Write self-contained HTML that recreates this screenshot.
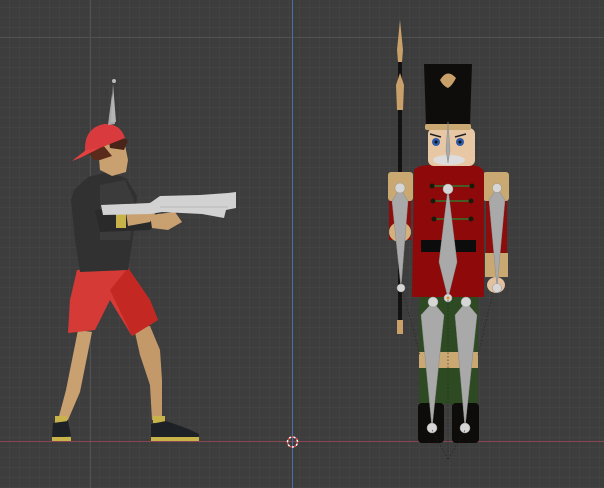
<!DOCTYPE html>
<html><head><meta charset="utf-8"><style>
html,body{margin:0;padding:0;background:#3d3d3d;}
svg{display:block}
</style></head><body>
<svg width="604" height="488" viewBox="0 0 604 488" xmlns="http://www.w3.org/2000/svg">
<defs>
<pattern id="g" x="9" y="7" width="10" height="10" patternUnits="userSpaceOnUse">
<path d="M0 0H10M0 0V10" stroke="#474747" stroke-width="1" fill="none"/>
</pattern>
</defs>
<rect width="604" height="488" fill="#3d3d3d"/>
<rect width="604" height="488" fill="url(#g)"/>
<line x1="0" y1="37.5" x2="604" y2="37.5" stroke="#515151"/>
<line x1="90.5" y1="0" x2="90.5" y2="488" stroke="#515151"/>
<line x1="0" y1="441.5" x2="604" y2="441.5" stroke="#8a4650" stroke-width="1"/>
<line x1="292.5" y1="0" x2="292.5" y2="488" stroke="#4a6ea8" stroke-width="1"/>

<!-- BOY -->
<!-- legs -->
<polygon points="78,330 92,332 80,392 68,420 58,420 66,390" fill="#c9a070"/>
<polygon points="134,328 150,326 160,350 162,380 162,420 152,420 150,385 140,355" fill="#c4996a"/>
<rect x="55" y="416" width="12" height="7" fill="#c8b24a"/>
<rect x="153" y="416" width="12" height="7" fill="#c8b24a"/>
<!-- shoes -->
<path d="M53 423 L68 421 L71 436 L52 438 Z" fill="#1e2226"/>
<rect x="52" y="437" width="19" height="4" fill="#c8b24a"/>
<path d="M151 424 L166 421 L186 428 L199 434 L199 438 L151 438 Z" fill="#1e2226"/>
<rect x="151" y="437" width="48" height="4" fill="#c8b24a"/>
<!-- shorts -->
<polygon points="77,270 128,268 150,300 158,320 132,336 110,300 95,330 68,333 70,300" fill="#d63a36"/>
<polygon points="110,290 128,268 150,300 158,320 132,336" fill="#c42822"/>
<!-- sweater -->
<polygon points="74,190 88,177 108,172 126,178 137,196 134,230 128,270 80,272 75,240 71,200" fill="#313131"/>
<polygon points="100,185 125,180 134,200 130,240 100,240" fill="#3b3b3b"/>
<!-- arms -->
<polygon points="95,210 150,205 160,218 150,230 100,232" fill="#2a2a2a"/>
<rect x="116" y="212" width="10" height="16" fill="#c8b24a"/>
<polygon points="126,212 152,202 160,204 156,212 150,222 128,226" fill="#c9a070"/>
<polygon points="150,215 175,212 182,222 168,230 152,228" fill="#c9a070"/>
<!-- gun -->
<polygon points="101,205 150,203 160,196 200,195 228,193 236,192 236,208 226,210 224,218 202,214 162,212 150,214 103,215" fill="#d2d2d2"/>
<line x1="160" y1="207" x2="228" y2="207" stroke="#b8b8b8"/>
<!-- head -->
<polygon points="98,146 124,140 128,160 126,172 112,176 100,170" fill="#c9a070"/>
<polygon points="86,150 103,145 112,156 100,160 94,160" fill="#5a2a1a"/>
<polygon points="108,135 128,140 124,150 110,148" fill="#4a2418"/>
<!-- cap -->
<path d="M85 151 Q84 128 104 124 Q120 123 125 138 L100 148 Z" fill="#d83a3e"/>
<polygon points="86,150 100,148 80,158 72,161" fill="#e2413f"/>
<polygon points="108,125 112,94 115,124" fill="#a9a9a9"/>
<circle cx="114" cy="81" r="2" fill="#bbb"/>
<polygon points="111,122 113,84 116,122" fill="#b5b5b5"/>

<!-- NUTCRACKER -->
<!-- spear -->
<rect x="398" y="60" width="4" height="270" fill="#141210"/>
<polygon points="400,20 403,50 402,62 398,62 397,50" fill="#c9a06a"/>
<polygon points="400,73 404,85 403,110 397,110 396,85" fill="#c9a06a"/>
<rect x="397" y="320" width="6" height="14" fill="#c9a06a"/>
<!-- legs -->
<rect x="419" y="296" width="59" height="60" fill="#2d4a22"/>
<rect x="419" y="352" width="59" height="16" fill="#c9a872"/>
<rect x="419" y="368" width="59" height="36" fill="#2d4a22"/>
<rect x="418" y="403" width="26" height="40" rx="4" fill="#0e0c0b"/>
<rect x="452" y="403" width="27" height="40" rx="4" fill="#0e0c0b"/>
<!-- sleeves -->
<rect x="389" y="198" width="22" height="42" fill="#8d0c0c"/>
<rect x="486" y="198" width="21" height="60" fill="#8d0c0c"/>
<rect x="485" y="253" width="23" height="24" fill="#c9a872"/>
<ellipse cx="496" cy="285" rx="9" ry="8" fill="#e2c0a0"/>
<ellipse cx="400" cy="232" rx="11" ry="10" fill="#d3b07c"/>
<rect x="388" y="172" width="25" height="29" rx="3" fill="#c9a872"/>
<rect x="483" y="172" width="26" height="29" rx="3" fill="#c9a872"/>
<!-- jacket -->
<path d="M414 170 Q418 165 430 165 L468 165 Q482 165 484 172 L484 297 L412 297 Z" fill="#8e0a0a"/>
<rect x="421" y="240" width="55" height="12" fill="#0c0c0c"/>
<g stroke="#4a5a24" stroke-width="2">
<line x1="432" y1="186" x2="472" y2="186"/>
<line x1="433" y1="201" x2="471" y2="201"/>
<line x1="434" y1="219" x2="471" y2="219"/>
</g>
<g fill="#1a1a0a">
<circle cx="432" cy="186" r="2.5"/><circle cx="472" cy="186" r="2.5"/>
<circle cx="433" cy="201" r="2.5"/><circle cx="471" cy="201" r="2.5"/>
<circle cx="434" cy="219" r="2.5"/><circle cx="471" cy="219" r="2.5"/>
</g>
<!-- face -->
<rect x="428" y="128" width="47" height="38" rx="6" fill="#e8c8a4"/>
<ellipse cx="449" cy="160" rx="16" ry="5" fill="#ddd"/>
<circle cx="436" cy="142" r="4" fill="#2e5aa8"/><circle cx="436" cy="142" r="1.5" fill="#111"/>
<circle cx="460" cy="142" r="4" fill="#2e5aa8"/><circle cx="460" cy="142" r="1.5" fill="#111"/>
<line x1="430" y1="134" x2="441" y2="137" stroke="#222" stroke-width="1.5"/>
<line x1="455" y1="137" x2="466" y2="134" stroke="#222" stroke-width="1.5"/>
<!-- hat -->
<path d="M424 64 L472 64 L470 125 L426 125 Z" fill="#0f0d0b"/>
<rect x="425" y="124" width="46" height="6" rx="2" fill="#c9a872"/>
<path d="M440 80 Q447 68 456 78 Q452 86 448 88 Q443 86 440 80 Z" fill="#c9a06a"/>
<!-- bones -->
<g fill="#a9a9a9" stroke="#8a8a8a" stroke-width="0.5">
<polygon points="400,188 408,201 401,288 392,201"/>
<polygon points="497,188 505,200 497,288 489,200"/>
<polygon points="448,188 457,262 448,298 439,262"/>
<polygon points="433,302 444,315 432,428 421,315"/>
<polygon points="466,302 477,315 465,428 455,315"/>
<polygon points="448,122 450,150 448,163 446,150"/>
</g>
<g fill="#d6d6d6" stroke="#999" stroke-width="0.5">
<circle cx="400" cy="188" r="5"/><circle cx="401" cy="288" r="4"/>
<circle cx="497" cy="188" r="4.5"/><circle cx="497" cy="288" r="4.5"/>
<circle cx="448" cy="189" r="5"/><circle cx="448" cy="298" r="4"/>
<circle cx="433" cy="302" r="5"/><circle cx="466" cy="302" r="5"/>
<circle cx="432" cy="428" r="5"/><circle cx="465" cy="428" r="5"/>
</g>
<circle cx="448" cy="298" r="1.5" fill="#e0902a"/>
<g stroke="#222" stroke-dasharray="1.5,2" stroke-width="0.6" fill="none">
<path d="M403 292 L420 355"/><path d="M493 292 L478 355"/>
<path d="M432 430 L448 460 L465 430"/><path d="M448 300 L448 460"/>
</g>

<!-- 3D cursor -->
<circle cx="292.5" cy="442" r="5" fill="none" stroke="#e84a4a" stroke-width="1.5" stroke-dasharray="2.5,2"/>
<circle cx="292.5" cy="442" r="5" fill="none" stroke="#fff" stroke-width="1.5" stroke-dasharray="2,2.5" stroke-dashoffset="2.5"/>
</svg>
</body></html>
